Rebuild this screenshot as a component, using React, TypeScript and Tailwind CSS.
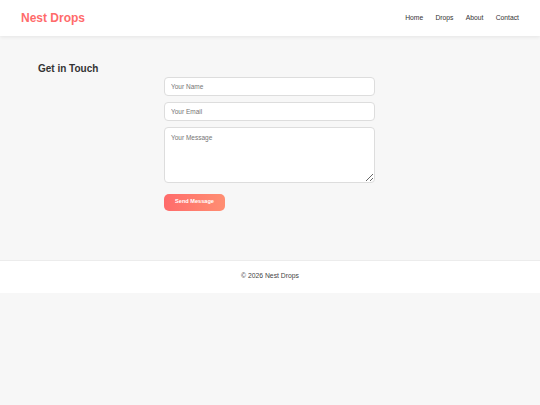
export default function App() {
  return (
    <div className="min-h-screen bg-[#f7f7f7] font-['Liberation_Sans',Arial,sans-serif] text-[#333]">
      {/* Header */}
      <header className="h-[36px] bg-white flex items-center justify-between px-[21px] shadow-[0_1px_4px_rgba(0,0,0,0.08)] relative z-10">
        <div className="text-[12px] font-bold text-[#ff6b6b] leading-none">Nest Drops</div>
        <nav className="flex items-center gap-[12.3px] text-[6.75px] text-[#333] leading-none">
          <a>Home</a>
          <a>Drops</a>
          <a>About</a>
          <a>Contact</a>
        </nav>
      </header>

      {/* Contact section */}
      <main className="flex items-start px-[38px] pt-[27px] pb-[49px]">
        <h2 className="w-[126px] text-[10px] leading-[12px] font-bold text-[#333]">Get in Touch</h2>
        <form className="w-[211px] mt-[14px] flex flex-col" onSubmit={(e) => e.preventDefault()}>
          <input
            type="text"
            placeholder="Your Name"
            className="h-[19px] px-[6px] bg-white border border-[#ddd] rounded-[4px] text-[6.5px] placeholder:text-[#757575] outline-none"
          />
          <input
            type="email"
            placeholder="Your Email"
            className="h-[19px] mt-[6px] px-[6px] bg-white border border-[#ddd] rounded-[4px] text-[6.5px] placeholder:text-[#757575] outline-none"
          />
          <textarea
            placeholder="Your Message"
            className="h-[56px] mt-[6px] px-[6px] py-[5px] bg-white border border-[#ddd] rounded-[4px] text-[6.5px] leading-[9px] placeholder:text-[#757575] outline-none resize-y"
          />
          <button
            type="submit"
            className="mt-[11px] self-start h-[16.5px] w-[61px] rounded-[5px] bg-gradient-to-r from-[#ff6b6b] to-[#ff8e72] text-white text-[5.6px] font-bold leading-none"
          >
            Send Message
          </button>
        </form>
      </main>

      {/* Footer */}
      <footer className="h-[33px] bg-white border-t border-[#ececec] flex items-center justify-center text-[6.8px] text-[#444]">
        © 2026 Nest Drops
      </footer>
    </div>
  );
}
